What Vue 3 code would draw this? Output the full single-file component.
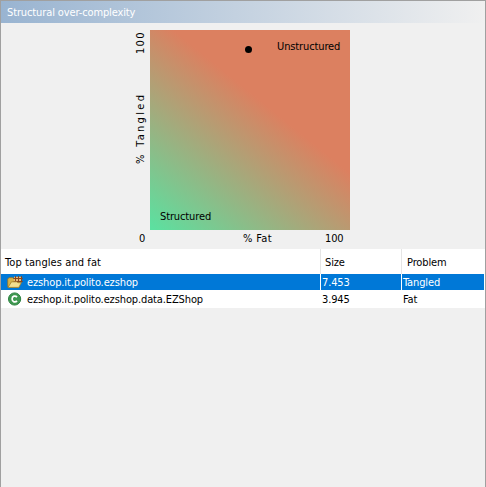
<script setup>
const rows = [
  { icon: 'package', name: 'ezshop.it.polito.ezshop', size: '7.453', problem: 'Tangled', selected: true },
  { icon: 'class', name: 'ezshop.it.polito.ezshop.data.EZShop', size: '3.945', problem: 'Fat', selected: false },
]
</script>

<template>
  <section class="panel">
    <header class="title">Structural over-complexity</header>
    <div class="chart">
      <div class="y-axis"><span class="y-name">% Tangled</span><span class="y-max">100</span></div>
      <div class="plot">
        <span class="zone top">Unstructured</span>
        <span class="zone bottom">Structured</span>
        <i class="dot"></i>
      </div>
      <div class="x-axis"><span class="zero">0</span><span class="x-name">% Fat</span><span class="x-max">100</span></div>
    </div>
    <div class="table">
      <div class="head">
        <div class="cell first">Top tangles and fat</div>
        <div class="cell">Size</div>
        <div class="cell">Problem</div>
      </div>
      <div v-for="row in rows" :key="row.name" class="row" :class="{ selected: row.selected }">
        <div class="cell name">
          <svg v-if="row.icon === 'package'" width="16" height="16" viewBox="0 0 16 16">
            <path d="M.7 12.8V5l1.2-1.3h4.2l1 1.3h5v7.8z" fill="#d8b34c" stroke="#927224" stroke-width=".8" />
            <path d="M7 2.8h7.5v5.7H7z" fill="#e9b978" />
            <path d="M6.5 4.5H15.8M6.5 7.5H15.8M8.5 2V8.5M11.5 2V8.5M14.5 2V8.5" fill="none" stroke="#87481f" stroke-width="1" />
            <path d="M1 13.4L4.5 7.8h5.2l1.2 .9h3.4L11.8 13.4z" fill="#f3df90" stroke="#a47d25" stroke-width=".8" />
          </svg>
          <svg v-else width="16" height="16" viewBox="0 0 16 16">
            <circle cx="7.6" cy="8" r="6.1" fill="#3f9850" stroke="#2c8240" />
            <path d="M10 6.1C8.4 4.2 5.1 4.9 5.1 8s3.3 3.8 4.9 1.9" fill="none" stroke="#fff" stroke-width="1.7" />
          </svg>
          <span>{{ row.name }}</span>
        </div>
        <div class="cell">{{ row.size }}</div>
        <div class="cell">{{ row.problem }}</div>
      </div>
    </div>
  </section>
</template>

<style>
body { margin: 0; }
</style>

<style scoped>
.panel {
  box-sizing: border-box;
  width: 486px;
  height: 487px;
  border: 1px solid #a0a0a0;
  border-bottom: 0;
  background: #f0f0f0;
  color: #000;
  font: 11px/16px "DejaVu Sans Condensed", "DejaVu Sans", sans-serif;
  font-stretch: condensed;
  letter-spacing: -0.12px;
  white-space: nowrap;
  overflow: hidden;
}
.title {
  height: 22px;
  line-height: 23px;
  padding-left: 6px;
  color: #fff;
  background: linear-gradient(90deg, #99b4d1, #f0f0f0);
}
.chart {
  display: grid;
  grid-template-columns: 16px 200px;
  grid-template-rows: 200px 19px;
  padding: 7px 0 0 133px;
}
.y-axis {
  display: flex;
  justify-content: space-between;
  writing-mode: vertical-rl;
  transform: rotate(180deg);
  line-height: 14px;
  height: 200px;
  width: 16px;
  letter-spacing: 2.3px;
  box-sizing: border-box;
  padding: 66px 0 1px;
}
.y-max { letter-spacing: 1.3px; }
.plot {
  position: relative;
  background: linear-gradient(39deg, #5ce0a0 1%, #dc8060 60.5%);
}
.zone { position: absolute; }
.zone.top { left: 127px; top: 9px; }
.zone.bottom { left: 10px; top: 179px; }
.dot {
  position: absolute;
  left: 95px;
  top: 16px;
  width: 7px;
  height: 7px;
  border-radius: 50%;
  background: #000;
}
.x-axis {
  grid-column: 1 / 3;
  display: grid;
  grid-template-columns: 104px 82px 30px;
  padding-left: 5px;
  line-height: 17px;
}
.x-name { letter-spacing: 0.35px; }
.table { background: #fff; }
.head, .row {
  display: grid;
  grid-template-columns: 320px 81px 83px;
}
.head { height: 25px; line-height: 27px; }
.head .cell { border-right: 1px solid #e5e5e5; padding-left: 4px; }
.head .first { letter-spacing: 0.08px; }
.head .cell:last-child { border: 0; padding-left: 5px; }
.row { height: 17px; line-height: 17px; }
.row .cell { padding-left: 1px; border-right: 1px solid #fff; }
.row .name { display: flex; gap: 4px; padding-left: 6px; letter-spacing: -0.12px; }
.selected { color: #fff; }
.selected .cell { background: #0078d7; height: 16px; }
</style>
